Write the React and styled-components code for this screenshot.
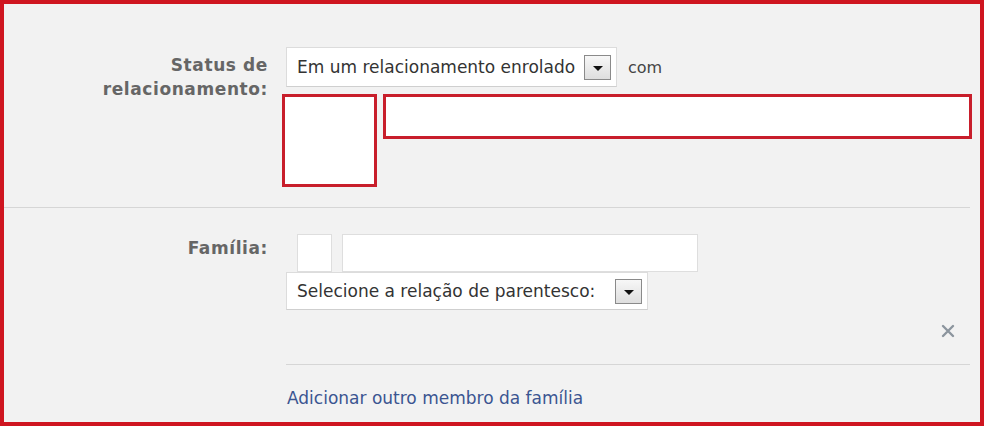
import React from 'react';
import styled, { createGlobalStyle } from 'styled-components';

const GlobalStyle = createGlobalStyle`
  html, body {
    margin: 0;
    padding: 0;
    background: #ffffff;
  }
  * {
    box-sizing: border-box;
  }
`;

const Frame = styled.div`
  width: 984px;
  height: 426px;
  border: 4px solid #cf1520;
  background: #f2f2f2;
  font-family: "DejaVu Sans", Verdana, sans-serif;
  color: #333;
  overflow: hidden;
`;

const Section = styled.div`
  padding: ${({ $top }) => $top}px 8px ${({ $bottom }) => $bottom}px 0;
`;

const Row = styled.div`
  display: grid;
  grid-template-columns: 264px 1fr;
  column-gap: 14px;
  align-items: start;
`;

const Label = styled.div`
  text-align: right;
  font-weight: bold;
  font-size: 17px;
  letter-spacing: 0.6px;
  line-height: 24px;
  color: #666;
  padding-top: ${({ $offset }) => $offset || 0}px;
`;

const Fields = styled.div`
  display: flex;
  flex-direction: column;
  gap: ${({ $gap }) => $gap || 0}px;
`;

const InlineRow = styled.div`
  display: flex;
  align-items: ${({ $align }) => $align || 'center'};
  gap: ${({ $gap }) => $gap || 0}px;
  padding-left: ${({ $indent }) => $indent || 0}px;
`;

const Select = styled.div`
  width: ${({ $width }) => $width}px;
  height: ${({ $height }) => $height}px;
  display: flex;
  align-items: center;
  justify-content: space-between;
  background: #fff;
  border: 1px solid #dcdcdc;
  border-bottom-color: #cfcfcf;
  padding: 0 5px 0 10px;
  font-size: 17px;
  color: #333;
  white-space: nowrap;
  margin-left: 4px;
`;

const ArrowBox = styled.span`
  width: 27px;
  height: 25px;
  border: 1px solid #8a8a8a;
  background: linear-gradient(#f7f7f7, #dedede);
  display: flex;
  align-items: center;
  justify-content: center;
  flex-shrink: 0;

  &::after {
    content: '';
    border-left: 5px solid transparent;
    border-right: 5px solid transparent;
    border-top: 5px solid #111;
    margin-top: 3px;
  }
`;

const Aside = styled.span`
  font-size: 16px;
  color: #444;
`;

const RedBox = styled.div`
  width: ${({ $width }) => ($width ? `${$width}px` : 'auto')};
  flex: ${({ $grow }) => ($grow ? 1 : 'none')};
  height: ${({ $height }) => $height}px;
  border: 3px solid #c81e2b;
  background: #fff;
`;

const PlainBox = styled.div`
  width: ${({ $width }) => $width}px;
  height: 38px;
  background: #fff;
  border: 1px solid #dedede;
`;

const Divider = styled.div`
  height: 1px;
  background: #d6d6d6;
  margin: ${({ $margin }) => $margin};
`;

const CloseRow = styled.div`
  display: flex;
  justify-content: flex-end;
  padding: 14px 17px 0 0;
  height: 45px;
`;

const Link = styled.a`
  font-size: 17px;
  color: #3b5591;
  text-decoration: none;
  padding-left: 5px;
`;

const CloseIcon = () => (
  <svg width="14" height="14" viewBox="0 0 14 14">
    <path d="M2 2 L12 12 M12 2 L2 12" stroke="#8c959e" strokeWidth="2.4" strokeLinecap="round" />
  </svg>
);

export default function App() {
  return (
    <>
      <GlobalStyle />
      <Frame>
        <Section $top={43} $bottom={20}>
          <Row>
            <Label $offset={6}>
              Status de
              <br />
              relacionamento:
            </Label>
            <Fields $gap={7}>
              <InlineRow $gap={11}>
                <Select $width={331} $height={40}>
                  Em um relacionamento enrolado
                  <ArrowBox />
                </Select>
                <Aside>com</Aside>
              </InlineRow>
              <InlineRow $gap={6} $align="flex-start">
                <RedBox $width={95} $height={93} />
                <RedBox $grow $height={45} />
              </InlineRow>
            </Fields>
          </Row>
        </Section>
        <Divider $margin="0 10px 0 0" />
        <Section $top={26} $bottom={0}>
          <Row>
            <Label $offset={2}>Família:</Label>
            <Fields>
              <InlineRow $gap={10} $indent={15}>
                <PlainBox $width={35} />
                <PlainBox $width={356} />
              </InlineRow>
              <InlineRow>
                <Select $width={362} $height={38}>
                  Selecione a relação de parentesco:
                  <ArrowBox />
                </Select>
              </InlineRow>
              <CloseRow>
                <CloseIcon />
              </CloseRow>
              <Divider $margin="9px 2px 23px 4px" />
              <div>
                <Link href="#">Adicionar outro membro da família</Link>
              </div>
            </Fields>
          </Row>
        </Section>
      </Frame>
    </>
  );
}
